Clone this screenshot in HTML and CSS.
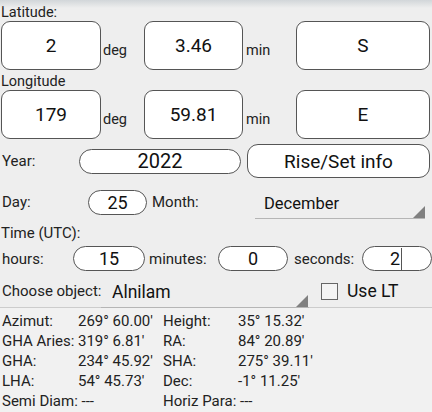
FILE: index.html
```html
<!DOCTYPE html>
<html lang="en">
	<head>
		<meta charset="UTF-8" />
		<meta name="viewport" content="width=device-width, initial-scale=1.0" />
		<title>Sight Reduction</title>
		<link rel="stylesheet" href="styles.css">
	</head>
	<body>
		<div class="top-shade"></div>
		<div class="form">
			<div class="label">Latitude:</div>
			<div class="coord-row">
				<div class="field field-deg">2</div>
				<span class="unit unit-deg">deg</span>
				<div class="field field-min">3.46</div>
				<span class="unit unit-min">min</span>
				<div class="field field-dir">S</div>
			</div>
			<div class="label">Longitude</div>
			<div class="coord-row">
				<div class="field field-deg">179</div>
				<span class="unit unit-deg">deg</span>
				<div class="field field-min">59.81</div>
				<span class="unit unit-min">min</span>
				<div class="field field-dir">E</div>
			</div>

			<div class="year-row">
				<span class="row-label year-label">Year:</span>
				<div class="pill year-pill">2022</div>
				<button class="rise-set">Rise/Set info</button>
			</div>

			<div class="day-row">
				<span class="row-label day-label">Day:</span>
				<div class="pill day-pill">25</div>
				<span class="row-label month-label">Month:</span>
				<div class="spinner month-spinner">December</div>
			</div>

			<div class="label time-label">Time (UTC):</div>
			<div class="time-row">
				<span class="row-label hours-label">hours:</span>
				<div class="pill hours-pill">15</div>
				<span class="row-label minutes-label">minutes:</span>
				<div class="pill minutes-pill">0</div>
				<span class="row-label seconds-label">seconds:</span>
				<div class="pill seconds-pill">2<span class="caret"></span></div>
			</div>

			<div class="object-row">
				<span class="row-label object-label">Choose object:</span>
				<div class="spinner object-spinner">Alnilam</div>
				<label class="use-lt"><span class="checkbox"></span>Use LT</label>
			</div>
		</div>

		<div class="results" id="results"></div>

		<script>
			// Computed values for the selected body
			const rows = [
				["Azimut:", "269° 60.00'", "Height:", "35° 15.32'"],
				["GHA Aries:", "319° 6.81'", "RA:", "84° 20.89'"],
				["GHA:", "234° 45.92'", "SHA:", "275° 39.11'"],
				["LHA:", "54° 45.73'", "Dec:", "-1° 11.25'"],
			];

			function renderResults() {
				const container = document.getElementById("results");
				rows.forEach((row) => {
					const line = document.createElement("div");
					line.className = "result-row";
					line.innerHTML = `
						<span class="r-label">${row[0]}</span>
						<span class="r-value">${row[1]}</span>
						<span class="r-label2">${row[2]}</span>
						<span class="r-value">${row[3]}</span>
					`;
					container.appendChild(line);
				});
				const last = document.createElement("div");
				last.className = "result-row last-row";
				last.innerHTML = `
					<span class="r-semi">Semi Diam: ---</span>
					<span class="r-horiz">Horiz Para: ---</span>
				`;
				container.appendChild(last);
			}

			renderResults();
		</script>
	</body>
</html>
```

FILE: styles.css
```css
:root {
	--bg-color: #eeeeee;
	--text-color: #222222;
	--field-bg: #ffffff;
	--field-border: #555555;
	--line-color: #b5b5b5;
	--arrow-color: #808080;
}
body {
	font-family: Roboto, "Noto Sans", sans-serif;
	background-color: var(--bg-color);
	color: var(--text-color);
	margin: 0;
	padding: 0;
	width: 432px;
	height: 412px;
	overflow: hidden;
	position: relative;
}
.top-shade {
	position: absolute;
	top: 0;
	left: 0;
	right: 0;
	height: 8px;
	background: linear-gradient(#d2d6d9, rgba(238, 238, 238, 0));
}
.form {
	padding: 4px 2px 0 1px;
	height: 303px;
	border-bottom: 1px solid #cccccc;
}
.label {
	font-size: 14.5px;
	line-height: 17px;
	height: 17px;
}
.coord-row {
	display: flex;
	align-items: center;
	height: 49px;
	margin-bottom: 3px;
}
.field {
	box-sizing: border-box;
	height: 49px;
	background-color: var(--field-bg);
	border: 1.5px solid var(--field-border);
	border-radius: 9px;
	display: flex;
	align-items: center;
	justify-content: center;
	font-size: 19px;
	color: #111111;
}
.field-deg {
	width: 100px;
}
.field-min {
	width: 99px;
}
.field-dir {
	width: 134px;
}
.unit {
	font-size: 14.5px;
	padding-top: 9px;
	padding-left: 2px;
}
.unit-deg {
	width: 41px;
}
.unit-min {
	padding-left: 3px;
	box-sizing: border-box;
	width: 53px;
}
.row-label {
	font-size: 15px;
	white-space: nowrap;
	flex-shrink: 0;
}
.pill {
	box-sizing: border-box;
	flex-shrink: 0;
	height: 25px;
	background-color: var(--field-bg);
	border: 1.5px solid var(--field-border);
	border-radius: 13px;
	display: flex;
	align-items: center;
	justify-content: center;
	font-size: 18px;
	color: #111111;
}
.year-row {
	display: flex;
	align-items: center;
	height: 34px;
	margin-top: 5px;
}
.year-label {
	width: 77px;
	padding-left: 1px;
}
.year-pill {
	width: 162px;
	font-size: 20px;
}
.rise-set {
	margin-left: 6px;
	width: 184px;
	height: 34px;
	background-color: var(--field-bg);
	border: 1.5px solid var(--field-border);
	border-radius: 11px;
	font-family: Roboto, "Noto Sans", sans-serif;
	font-size: 19px;
	color: #111111;
	padding: 0;
}
.day-row {
	display: flex;
	align-items: center;
	height: 26px;
	margin-top: 11px;
}
.day-label {
	width: 86px;
	padding-left: 1px;
}
.day-pill {
	width: 59px;
}
.month-label {
	margin-left: 5px;
	width: 103px;
}
.spinner {
	position: relative;
	box-sizing: border-box;
	border-bottom: 1px solid var(--line-color);
	font-size: 16.5px;
	color: #111111;
}
.spinner::after {
	content: "";
	position: absolute;
	right: 0;
	bottom: 0;
	width: 0;
	height: 0;
	border-style: solid;
	border-width: 0 0 12px 12px;
	border-color: transparent transparent var(--arrow-color) transparent;
}
.month-spinner {
	width: 170px;
	height: 30px;
	padding: 5px 0 0 9px;
	margin-top: 3px;
}
.time-label {
	margin-top: 10px;
	font-size: 15px;
	height: 18px;
}
.time-row {
	display: flex;
	align-items: center;
	height: 25px;
	margin-top: 3px;
}
.hours-label {
	width: 71px;
	padding-left: 1px;
}
.hours-pill {
	width: 72px;
}
.minutes-label {
	margin-left: 4px;
	width: 69px;
}
.minutes-pill {
	width: 70px;
}
.seconds-label {
	margin-left: 6px;
	width: 68px;
}
.seconds-pill {
	width: 70px;
	justify-content: flex-end;
	padding-right: 29px;
}
.caret {
	display: inline-block;
	width: 1px;
	height: 22px;
	background-color: #555555;
	margin-left: 1px;
}
.object-row {
	display: flex;
	align-items: center;
	height: 28px;
	margin-top: 6px;
}
.object-label {
	width: 99px;
	padding-left: 1px;
}
.object-spinner {
	flex-shrink: 0;
	width: 208px;
	height: 30px;
	padding: 4px 0 0 11px;
	font-size: 17.5px;
	margin-top: 4px;
}
.object-spinner::after {
	right: 1px;
}
.use-lt {
	display: flex;
	align-items: center;
	margin-left: 12px;
	font-size: 17.5px;
	color: #111111;
}
.checkbox {
	box-sizing: border-box;
	width: 17px;
	height: 17px;
	border: 1px solid #666666;
	background-color: #f4f4f4;
	margin-right: 9px;
}
.results {
	padding: 3px 0 0 2px;
	background-color: #f1f1f1;
	height: 105px;
}
.result-row {
	display: flex;
	height: 20px;
	line-height: 20px;
	font-size: 15px;
	color: #222222;
}
.r-label {
	width: 76px;
}
.r-value {
	width: 85px;
}
.r-label2 {
	width: 75px;
}
.r-semi {
	width: 161px;
}
```
